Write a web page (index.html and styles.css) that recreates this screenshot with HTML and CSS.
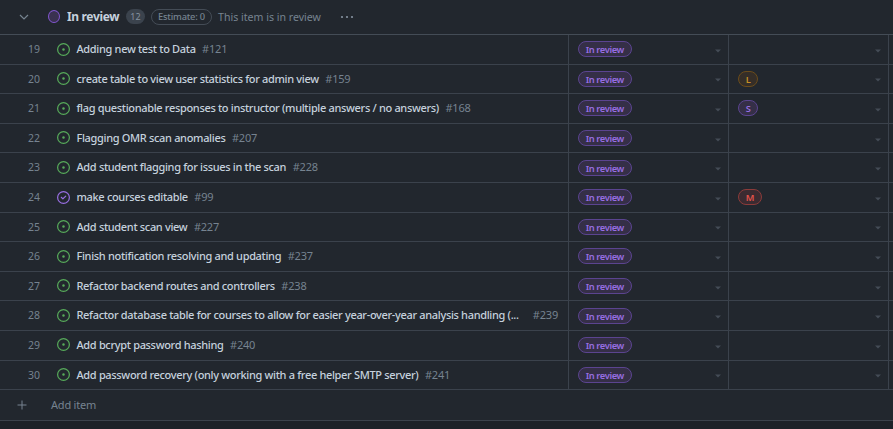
FILE: index.html
```html
<!DOCTYPE html>
<html lang="en">
<head>
<meta charset="utf-8">
<title>In review</title>
<link rel="stylesheet" href="styles.css">
</head>
<body>
<svg class="defs" aria-hidden="true">
  <symbol id="open" viewBox="0 0 16 16"><path d="M8 9.5a1.5 1.5 0 1 0 0-3 1.5 1.5 0 0 0 0 3Z"/><path d="M8 0a8 8 0 1 1 0 16A8 8 0 0 1 8 0ZM1.5 8a6.5 6.5 0 1 0 13 0 6.5 6.5 0 0 0-13 0Z"/></symbol>
  <symbol id="closed" viewBox="0 0 16 16"><path d="M11.28 6.78a.75.75 0 0 0-1.06-1.06L7.25 8.69 5.78 7.22a.75.75 0 0 0-1.06 1.06l2 2a.75.75 0 0 0 1.06 0l3.5-3.5Z"/><path d="M16 8A8 8 0 1 1 0 8a8 8 0 0 1 16 0Zm-1.5 0a6.5 6.5 0 1 0-13 0 6.5 6.5 0 0 0 13 0Z"/></symbol>
</svg>
<header class="group">
  <svg class="chevron" viewBox="0 0 10 6"><path d="M1 1l4 4 4-4"/></svg>
  <span class="dot"></span>
  <h1 class="name">In review</h1>
  <span class="count">12</span>
  <span class="estimate">Estimate: 0</span>
  <span class="desc">This item is in review</span>
  <svg class="more" viewBox="0 0 14 4"><circle cx="2" cy="2" r="1.1"/><circle cx="7" cy="2" r="1.1"/><circle cx="12" cy="2" r="1.1"/></svg>
</header>
<main class="rows" id="rows"></main>
<footer class="add">
  <svg class="plus" viewBox="0 0 10 10"><path d="M5 .5v9M.5 5h9"/></svg>
  <span>Add item</span>
</footer>
<script src="rows.js"></script>
</body>
</html>
```
FILE: rows.js
```js
const items = [
  ["Adding new test to Data", 121],
  ["create table to view user statistics for admin view", 159, "L"],
  ["flag questionable responses to instructor (multiple answers / no answers)", 168, "S"],
  ["Flagging OMR scan anomalies", 207],
  ["Add student flagging for issues in the scan", 228],
  ["make courses editable", 99, "M", true],
  ["Add student scan view", 227],
  ["Finish notification resolving and updating", 237],
  ["Refactor backend routes and controllers", 238],
  ["Refactor database table for courses to allow for easier year-over-year analysis handling (...", 239],
  ["Add bcrypt password hashing", 240],
  ["Add password recovery (only working with a free helper SMTP server)", 241]
];
const caret = '<svg class="caret" viewBox="0 0 6 4"><path d="M0 .5h6L3 3.5z"/></svg>';
document.getElementById("rows").innerHTML = items.map(([title, id, size, closed], i) => `
  <div class="row">
    <span class="num">${i + 19}</span>
    <div class="title-cell">
      <svg class="state ${closed ? "closed" : "open"}"><use href="#${closed ? "closed" : "open"}"/></svg>
      <span class="title">${title}</span>
      <span class="ref${id === 239 ? " end" : ""}">#${id}</span>
    </div>
    <div class="cell"><span class="pill">In review</span>${caret}</div>
    <div class="cell">${size ? `<span class="pill size-${size}">${size}</span>` : ""}${caret}</div>
    <div class="cell"></div>
  </div>`).join("");
```
FILE: styles.css
```css
* { box-sizing: border-box; }
body {
  margin: 0;
  height: 429px;
  overflow: hidden;
  background: #1c2128;
  color: #c5d1dd;
  font: 11px/16px "Noto Sans", sans-serif;
}
svg { display: block; flex: none; }
.defs { position: absolute; width: 0; height: 0; }
.group {
  display: flex;
  align-items: center;
  height: 35px;
  padding: 0 0 1px 19px;
  background: #22272e;
  border-bottom: 1px solid #444c56;
}
.chevron { width: 10px; height: 6px; fill: none; stroke: #768390; stroke-width: 1.2; }
.dot {
  width: 12px;
  height: 13px;
  margin-left: 19px;
  border: 1px solid #8256d0;
  border-radius: 50%;
  background: #3a3150;
}
.name { margin: 1px 0 0 7px; width: 52px; font-size: 12px; font-weight: 700; letter-spacing: -.35px; white-space: nowrap; }
.count {
  margin-left: 7px;
  width: 19px;
  height: 15px;
  border-radius: 8px;
  background: #3b434d;
  color: #8693a0;
  font-size: 9px;
  line-height: 15px;
  text-align: center;
}
.estimate {
  margin-left: 6px;
  width: 61px;
  height: 16px;
  border: 1px solid #444c56;
  border-radius: 8px;
  color: #768390;
  font-size: 9.3px;
  font-weight: 500;
  letter-spacing: -.2px;
  line-height: 13px;
  text-align: center;
}
.desc { margin-left: 6px; width: 103px; color: #768390; font-size: 10.6px; white-space: nowrap; }
.more { width: 14px; height: 4px; margin-left: 19px; fill: #8693a0; }
.rows { background: #22272e; }
.row {
  display: grid;
  grid-template-columns: 40px 528px 160px 160px 5px;
  height: 29.6px;
  border-bottom: 1px solid #3b424c;
}
.num { align-self: center; padding-bottom: .5px; text-align: right; color: #768390; font-size: 10.5px; }
.title-cell { display: flex; align-items: center; min-width: 0; padding: 0 10px .5px 17px; white-space: nowrap; }
.state { width: 13px; height: 13px; }
.state.open { fill: #57ab5a; }
.state.closed { fill: #986ee2; }
.title { margin-left: 6.5px; font-weight: 500; letter-spacing: -.33px; }
.ref { margin-left: 6.5px; color: #768390; letter-spacing: -.2px; }
.ref.end { margin-left: auto; }
.cell {
  display: flex;
  align-items: center;
  padding: 0 7px 0 9px;
  border-left: 1px solid #3b424c;
}
.pill {
  height: 16px;
  padding: 0 6.7px;
  border: 1px solid #5b4490;
  border-radius: 8px;
  background: #352f47;
  color: #986ee2;
  font-size: 9.3px;
  font-weight: 600;
  letter-spacing: -.37px;
  line-height: 15px;
}
.size-L { border-color: #6b4c1b; background: #352e28; color: #c69026; }
.size-M { border-color: #8b3b3a; background: #3b2b31; color: #e5534b; }
.caret { width: 6px; height: 4px; margin: 3px 0 0 auto; fill: #444c56; }
.add {
  display: flex;
  align-items: center;
  height: 31px;
  padding-left: 17px;
  background: #22272e;
  border-bottom: 1px solid #3b424c;
  color: #768390;
  letter-spacing: -.2px;
}
.plus { width: 10px; height: 10px; margin-right: 24px; fill: none; stroke: #768390; }
```
